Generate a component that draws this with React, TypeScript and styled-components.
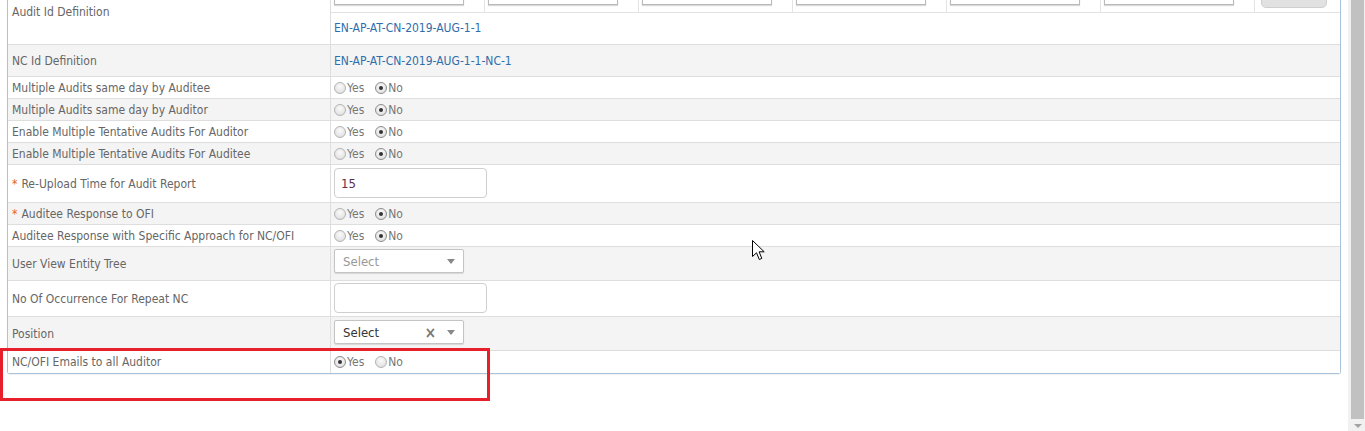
import React from 'react';
import styled, { createGlobalStyle } from 'styled-components';

const Global = createGlobalStyle`
  html, body { margin: 0; padding: 0; background: #fff; overflow: hidden; }
  body {
    font-family: "DejaVu Sans Condensed", "DejaVu Sans", sans-serif;
    font-stretch: condensed;
    font-size: 12px;
    color: #666;
  }
  * { box-sizing: border-box; }
`;

const Page = styled.div`
  position: relative;
  display: flex;
  width: 1365px;
  height: 431px;
  overflow: hidden;
`;

const Content = styled.div`
  flex: 1;
  padding: 0 7px;
  overflow: hidden;
`;

const Panel = styled.div`
  margin-top: -20px;
  border: 1px solid #a9c3da;
  border-top: none;
  border-radius: 0 0 3px 3px;
  box-shadow: 0 1px 1px rgba(0, 0, 0, 0.06);
  background: #fff;
`;

const Row = styled.div<{ $h: number; $alt?: boolean }>`
  display: flex;
  height: ${(p) => p.$h}px;
  background: ${(p) => (p.$alt ? '#f4f4f4' : '#fff')};
  border-bottom: 1px solid #dedede;
  &:last-child { border-bottom: none; }
`;

const Label = styled.div`
  width: 323px;
  flex: none;
  display: flex;
  align-items: center;
  padding-left: 4px;
  border-right: 1px solid #dedede;
  color: #666;
  white-space: nowrap;
`;

const Star = styled.span`
  color: #e4602a;
  margin-right: 4px;
`;

const Value = styled.div<{ $top?: number }>`
  flex: 1;
  display: flex;
  align-items: ${(p) => (p.$top !== undefined ? 'flex-start' : 'center')};
  padding-top: ${(p) => p.$top ?? 0}px;
  padding-left: 3px;
`;

const NestedValue = styled.div`
  flex: 1;
  display: flex;
  flex-direction: column;
`;

const FilterBar = styled.div`
  display: flex;
  height: 33px;
  border-bottom: 1px solid #e2e2e2;
`;

const FilterCell = styled.div<{ $last?: boolean }>`
  width: ${(p) => (p.$last ? 'auto' : '154px')};
  flex: ${(p) => (p.$last ? '1' : 'none')};
  display: flex;
  align-items: flex-end;
  padding: 0 0 7px ${(p) => (p.$last ? 6 : 3)}px;
  border-right: ${(p) => (p.$last ? 'none' : '1px solid #e4e4e4')};
`;

const FilterInput = styled.div`
  width: 130px;
  height: 24px;
  border: 1px solid #b9b9b9;
  box-shadow: 0 1px 1px rgba(0, 0, 0, 0.15);
  background: #fff;
`;

const FilterButton = styled.div`
  width: 66px;
  height: 28px;
  margin-bottom: -3px;
  background: #e1e1e1;
  border: 1px solid #cfcfcf;
  border-radius: 0 0 5px 5px;
`;

const DefText = styled.div`
  flex: 1;
  display: flex;
  align-items: center;
  padding: 0 0 2px 3px;
  color: #2f6ead;
`;

const LinkText = styled.span`
  color: #2f6ead;
`;

const TextInput = styled.div`
  width: 153px;
  height: 30px;
  border: 1px solid #cfcfcf;
  border-radius: 4px;
  padding-left: 6px;
  display: flex;
  align-items: center;
  color: #5d3346;
  font-size: 13px;
  background: #fff;
`;

const SelectBox = styled.div<{ $filled?: boolean }>`
  width: 130px;
  height: 24px;
  border: 1px solid #c4c4c4;
  box-shadow: 0 1px 1px rgba(0, 0, 0, 0.12);
  border-radius: 2px;
  background: #fff;
  display: flex;
  align-items: center;
  padding: 1px 8px 0 8px;
  font-size: 13px;
  color: ${(p) => (p.$filled ? '#333' : '#999')};
`;

const SelectText = styled.span`
  flex: 1;
`;

const ClearX = styled.span`
  color: #777;
  font-size: 15px;
  font-weight: bold;
  margin-right: 11px;
  font-family: "DejaVu Sans", sans-serif;
`;

const Caret = styled.span`
  width: 0;
  height: 0;
  border-left: 4px solid transparent;
  border-right: 4px solid transparent;
  border-top: 5px solid #888;
`;

const RadioGroup = styled.div`
  display: flex;
  align-items: center;
`;

const RadioOption = styled.label`
  display: flex;
  align-items: center;
  margin-right: 11px;
  color: #777;
`;

const RadioDot = styled.span<{ $on?: boolean }>`
  position: relative;
  width: 12px;
  height: 12px;
  border-radius: 50%;
  border: 1px solid ${(p) => (p.$on ? '#8d8d8d' : '#b4b4b4')};
  background: radial-gradient(circle at 50% 35%, #fafafa 0%, #e4e4e4 70%, #d2d2d2 100%);
  margin-right: 1px;
  &::after {
    content: '';
    display: ${(p) => (p.$on ? 'block' : 'none')};
    position: absolute;
    left: 3px;
    top: 3px;
    width: 4px;
    height: 4px;
    border-radius: 50%;
    background: #333;
  }
`;

const ScrollTrack = styled.div`
  width: 17px;
  flex: none;
  background: #f1f1f1;
  display: flex;
  flex-direction: column;
  align-items: center;
  padding: 0 1px 0 3px;
`;

const ScrollThumb = styled.div`
  width: 13px;
  height: 419px;
  background: #c1c1c1;
`;

const ScrollArrow = styled.div`
  margin-top: 5px;
  width: 0;
  height: 0;
  border-left: 4px solid transparent;
  border-right: 4px solid transparent;
  border-top: 4px solid #a3a3a3;
`;

const Highlight = styled.div`
  position: absolute;
  left: 0;
  top: 348px;
  width: 490px;
  height: 53px;
  border: 3px solid #e61f2a;
  pointer-events: none;
`;

const Cursor = styled.svg`
  position: absolute;
  left: 752px;
  top: 240px;
`;

type YN = 'yes' | 'no';

const Radios = ({ value }: { value: YN }) => (
  <RadioGroup>
    <RadioOption>
      <RadioDot $on={value === 'yes'} />
      Yes
    </RadioOption>
    <RadioOption>
      <RadioDot $on={value === 'no'} />
      No
    </RadioOption>
  </RadioGroup>
);

const radioRows: { label: string; alt: boolean; value: YN }[] = [
  { label: 'Multiple Audits same day by Auditee', alt: false, value: 'no' },
  { label: 'Multiple Audits same day by Auditor', alt: true, value: 'no' },
  { label: 'Enable Multiple Tentative Audits For Auditor', alt: false, value: 'no' },
  { label: 'Enable Multiple Tentative Audits For Auditee', alt: true, value: 'no' },
];

export default function App() {
  return (
    <Page>
      <Global />
      <Content>
        <Panel>
          <Row $h={65}>
            <Label>Audit Id Definition</Label>
            <NestedValue>
              <FilterBar>
                {[0, 1, 2, 3, 4, 5].map((i) => (
                  <FilterCell key={i}>
                    <FilterInput />
                  </FilterCell>
                ))}
                <FilterCell $last>
                  <FilterButton />
                </FilterCell>
              </FilterBar>
              <DefText>EN-AP-AT-CN-2019-AUG-1-1</DefText>
            </NestedValue>
          </Row>
          <Row $h={32} $alt>
            <Label>NC Id Definition</Label>
            <Value>
              <LinkText>EN-AP-AT-CN-2019-AUG-1-1-NC-1</LinkText>
            </Value>
          </Row>
          {radioRows.map((r) => (
            <Row key={r.label} $h={22} $alt={r.alt}>
              <Label>{r.label}</Label>
              <Value>
                <Radios value={r.value} />
              </Value>
            </Row>
          ))}
          <Row $h={38}>
            <Label>
              <Star>*</Star>Re-Upload Time for Audit Report
            </Label>
            <Value $top={3}>
              <TextInput>15</TextInput>
            </Value>
          </Row>
          <Row $h={22} $alt>
            <Label>
              <Star>*</Star>Auditee Response to OFI
            </Label>
            <Value>
              <Radios value="no" />
            </Value>
          </Row>
          <Row $h={22}>
            <Label>Auditee Response with Specific Approach for NC/OFI</Label>
            <Value>
              <Radios value="no" />
            </Value>
          </Row>
          <Row $h={34} $alt>
            <Label>User View Entity Tree</Label>
            <Value $top={2}>
              <SelectBox>
                <SelectText>Select</SelectText>
                <Caret />
              </SelectBox>
            </Value>
          </Row>
          <Row $h={36}>
            <Label>No Of Occurrence For Repeat NC</Label>
            <Value $top={2}>
              <TextInput />
            </Value>
          </Row>
          <Row $h={34} $alt>
            <Label>Position</Label>
            <Value $top={3}>
              <SelectBox $filled>
                <SelectText>Select</SelectText>
                <ClearX>×</ClearX>
                <Caret />
              </SelectBox>
            </Value>
          </Row>
          <Row $h={22}>
            <Label>NC/OFI Emails to all Auditor</Label>
            <Value>
              <Radios value="yes" />
            </Value>
          </Row>
        </Panel>
      </Content>
      <ScrollTrack>
        <ScrollThumb />
        <ScrollArrow />
      </ScrollTrack>
      <Highlight />
      <Cursor width="14" height="21" viewBox="0 0 14 21">
        <path
          d="M0.5 0.5 L0.5 16.5 L4.5 12.8 L7.3 19.5 L9.8 18.4 L7.1 11.8 L12.2 11.8 Z"
          fill="#fff"
          stroke="#000"
          strokeWidth="1"
          strokeLinejoin="miter"
        />
      </Cursor>
    </Page>
  );
}
